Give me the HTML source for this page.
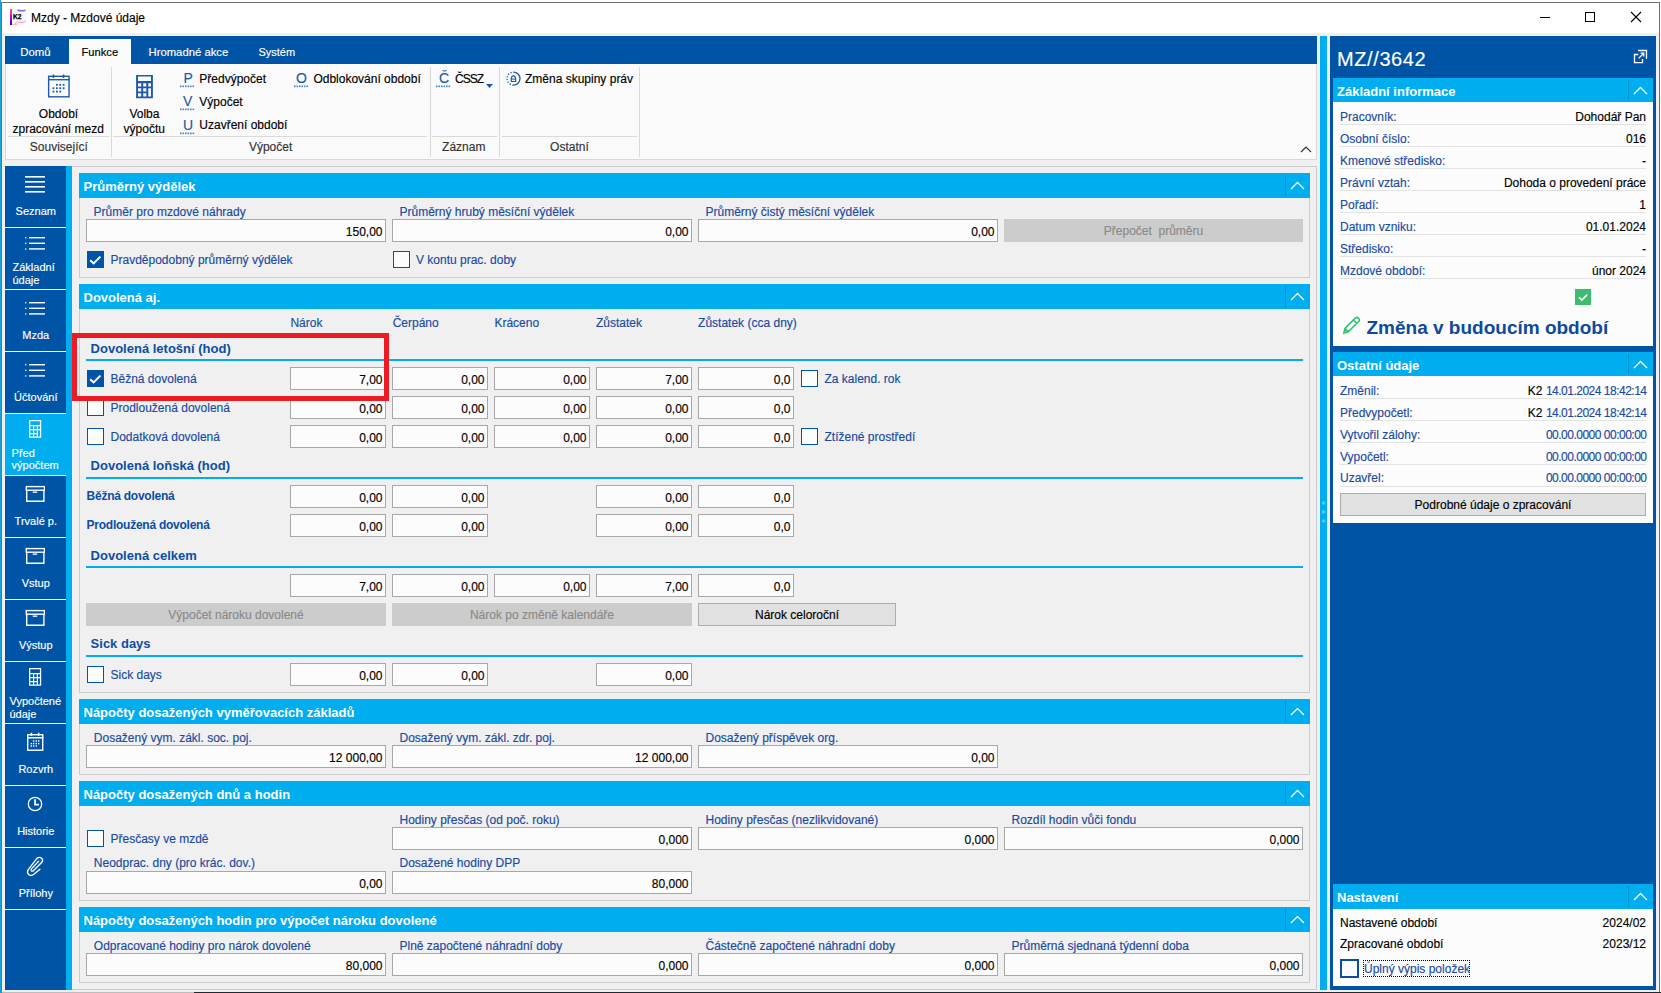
<!DOCTYPE html><html><head><meta charset="utf-8"><style>
html,body{margin:0;padding:0;width:1661px;height:993px;overflow:hidden;}
body{position:relative;font-family:"Liberation Sans",sans-serif;}
body>div,body>svg{position:absolute;}
.t{white-space:pre;-webkit-text-stroke:0.15px currentColor;}
.b{-webkit-text-stroke:0;}
</style></head><body>
<div style="left:0px;top:0px;width:1661px;height:993px;background:#ffffff;"></div>
<div style="left:0px;top:0px;width:1px;height:993px;background:#1aa3d8;"></div>
<div style="left:1px;top:2px;width:1659px;height:991px;box-sizing:border-box;border:1px solid #707070;"></div>
<div style="left:2px;top:33px;width:1657px;height:959px;background:#f0f0f0;"></div>
<svg style="left:9px;top:8px" width="18" height="18" viewBox="0 0 18 18"><defs><linearGradient id="kg" x1="0" y1="0" x2="0" y2="1"><stop offset="0" stop-color="#ff5a5a"/><stop offset="0.5" stop-color="#d400d4"/><stop offset="1" stop-color="#1a00e6"/></linearGradient></defs><rect x="3" y="1" width="14" height="16" fill="#f7f7fa"/><rect x="1" y="1" width="2" height="16" fill="url(#kg)"/><path d="M8.5 2 Q12 3.6 16.5 2.2" stroke="#7050f0" stroke-width="1.5" fill="none" opacity="0.85"/><path d="M6 15.5 Q9 13 12 14.5 Q14 15.2 16.3 12.8" stroke="#f090c0" stroke-width="1.1" fill="none" opacity="0.8"/><path d="M3.5 16.6 L8 16.6" stroke="#ffa080" stroke-width="1" opacity="0.8"/><text x="3.9" y="11.4" font-family="Liberation Sans" font-weight="bold" font-size="6.6" fill="#000" stroke="#000" stroke-width="0.25">K2</text></svg>
<div class="t" style="left:31px;top:11.84px;font-size:12px;line-height:12px;color:#000;">Mzdy - Mzdové údaje</div>
<div style="left:1540px;top:17px;width:10px;height:1px;background:#000;"></div>
<div style="left:1585px;top:12px;width:10px;height:10px;box-sizing:border-box;border:1px solid #000;"></div>
<svg style="left:1630px;top:11px" width="12" height="12" viewBox="0 0 12 12"><path d="M1 1 L11 11 M11 1 L1 11" stroke="#000" stroke-width="1.1"/></svg>
<div style="left:5px;top:36px;width:1312px;height:28px;background:#0054a5;"></div>
<div style="left:69px;top:39px;width:62px;height:25px;background:#fafafa;"></div>
<div class="t" style="left:20.2px;top:47.05px;font-size:11.4px;line-height:11.4px;color:#fff;">Domů</div>
<div class="t" style="left:81.5px;top:47.22px;font-size:11.2px;line-height:11.2px;color:#000;">Funkce</div>
<div class="t" style="left:148.5px;top:47.13px;font-size:11.3px;line-height:11.3px;color:#fff;">Hromadné akce</div>
<div class="t" style="left:258.4px;top:47.39px;font-size:11px;line-height:11px;color:#fff;">Systém</div>
<div style="left:5px;top:64px;width:1312px;height:96px;background:#fafafa;box-sizing:border-box;border:1px solid #d9d9d9;border-top:none;"></div>
<div style="left:111px;top:67px;width:1px;height:90px;background:#d9d9d9;"></div>
<div style="left:430px;top:67px;width:1px;height:90px;background:#d9d9d9;"></div>
<div style="left:499px;top:67px;width:1px;height:90px;background:#d9d9d9;"></div>
<div style="left:639px;top:67px;width:1px;height:90px;background:#d9d9d9;"></div>
<div style="left:8px;top:136px;width:101px;height:1px;background:#dadada;"></div>
<div style="left:113px;top:136px;width:314px;height:1px;background:#dadada;"></div>
<div style="left:432px;top:136px;width:65px;height:1px;background:#dadada;"></div>
<div style="left:502px;top:136px;width:135px;height:1px;background:#dadada;"></div>
<div class="t" style="left:-1.2000000000000028px;width:120px;text-align:center;top:141.04px;font-size:12px;line-height:12px;color:#333333;">Související</div>
<div class="t" style="left:210.60000000000002px;width:120px;text-align:center;top:141.04px;font-size:12px;line-height:12px;color:#333333;">Výpočet</div>
<div class="t" style="left:423.8px;width:80px;text-align:center;top:141.04px;font-size:12px;line-height:12px;color:#333333;">Záznam</div>
<div class="t" style="left:529.4px;width:80px;text-align:center;top:141.04px;font-size:12px;line-height:12px;color:#333333;">Ostatní</div>
<svg style="left:47px;top:74px" width="24" height="25" viewBox="0 0 24 25"><rect x="1.65" y="2.3" width="20.4" height="20.5" fill="none" stroke="#1e5aa8" stroke-width="1.4"/><rect x="1" y="5" width="21.7" height="1.4" fill="#1e5aa8"/><rect x="5.6" y="0.6" width="1.7" height="3.4" rx="0.6" fill="#1e5aa8"/><rect x="15.7" y="0.6" width="1.7" height="3.4" rx="0.6" fill="#1e5aa8"/>
<g fill="#1e5aa8"><rect x="9.0" y="9.9" width="1.8" height="1.8"/><rect x="12.3" y="9.9" width="1.8" height="1.8"/><rect x="15.7" y="9.9" width="1.8" height="1.8"/><rect x="5.5" y="13.3" width="1.8" height="1.8"/><rect x="9.0" y="13.3" width="1.8" height="1.8"/><rect x="12.3" y="13.3" width="1.8" height="1.8"/><rect x="15.7" y="13.3" width="1.8" height="1.8"/><rect x="5.5" y="16.7" width="1.8" height="1.8"/><rect x="9.0" y="16.7" width="1.8" height="1.8"/><rect x="12.3" y="16.7" width="1.8" height="1.8"/></g></svg>
<div class="t" style="left:3.5px;width:110px;text-align:center;top:107.84px;font-size:12px;line-height:12px;color:#000;">Období</div>
<div class="t" style="left:3.200000000000003px;width:110px;text-align:center;top:123.44px;font-size:12px;line-height:12px;color:#000;">zpracování mezd</div>
<svg style="left:136px;top:74px" width="18" height="25" viewBox="0 0 18 25"><path fill="#1e5aa8" fill-rule="evenodd" d="M0.1 0.9 H16.9 V24.3 H0.1 Z M2 2.5 V7 H15 V2.5 Z M2 9.2 V12.4 H5.2 V9.2 Z M7.2 9.2 V12.4 H10.3 V9.2 Z M12.3 9.2 V12.4 H15 V9.2 Z M2 14.3 V17.4 H5.2 V14.3 Z M7.2 14.3 V17.4 H10.3 V14.3 Z M12.3 14.3 V22.6 H15 V14.3 Z M2 19.3 V22.6 H5.2 V19.3 Z M7.2 19.3 V22.6 H10.3 V19.3 Z"/></svg>
<div class="t" style="left:104.4px;width:80px;text-align:center;top:107.84px;font-size:12px;line-height:12px;color:#000;">Volba</div>
<div class="t" style="left:104.30000000000001px;width:80px;text-align:center;top:123.44px;font-size:12px;line-height:12px;color:#000;">výpočtu</div>
<div class="t" style="left:183.5px;top:71.15px;font-size:14px;line-height:14px;color:#1e5aa8;">P</div>
<svg style="left:180px;top:85px" width="15" height="3" viewBox="0 0 15 3"><rect x="0.00" y="0.5" width="1.6" height="1.7" fill="#4f86c6"/><rect x="2.50" y="0.5" width="1.6" height="1.7" fill="#4f86c6"/><rect x="5.00" y="0.5" width="1.6" height="1.7" fill="#4f86c6"/><rect x="7.50" y="0.5" width="1.6" height="1.7" fill="#4f86c6"/><rect x="10.00" y="0.5" width="1.6" height="1.7" fill="#4f86c6"/><rect x="12.50" y="0.5" width="1.6" height="1.7" fill="#4f86c6"/><rect x="15.00" y="0.5" width="1.6" height="1.7" fill="#4f86c6"/></svg>
<div class="t" style="left:199.3px;top:72.84px;font-size:12px;line-height:12px;color:#000;">Předvýpočet</div>
<div class="t" style="left:183px;top:94.15px;font-size:14px;line-height:14px;color:#1e5aa8;">V</div>
<svg style="left:180px;top:108px" width="15" height="3" viewBox="0 0 15 3"><rect x="0.00" y="0.5" width="1.6" height="1.7" fill="#4f86c6"/><rect x="2.50" y="0.5" width="1.6" height="1.7" fill="#4f86c6"/><rect x="5.00" y="0.5" width="1.6" height="1.7" fill="#4f86c6"/><rect x="7.50" y="0.5" width="1.6" height="1.7" fill="#4f86c6"/><rect x="10.00" y="0.5" width="1.6" height="1.7" fill="#4f86c6"/><rect x="12.50" y="0.5" width="1.6" height="1.7" fill="#4f86c6"/><rect x="15.00" y="0.5" width="1.6" height="1.7" fill="#4f86c6"/></svg>
<div class="t" style="left:199.3px;top:95.84px;font-size:12px;line-height:12px;color:#000;">Výpočet</div>
<div class="t" style="left:183px;top:117.65px;font-size:14px;line-height:14px;color:#1e5aa8;">U</div>
<svg style="left:180px;top:131.5px" width="15" height="3" viewBox="0 0 15 3"><rect x="0.00" y="0.5" width="1.6" height="1.7" fill="#4f86c6"/><rect x="2.50" y="0.5" width="1.6" height="1.7" fill="#4f86c6"/><rect x="5.00" y="0.5" width="1.6" height="1.7" fill="#4f86c6"/><rect x="7.50" y="0.5" width="1.6" height="1.7" fill="#4f86c6"/><rect x="10.00" y="0.5" width="1.6" height="1.7" fill="#4f86c6"/><rect x="12.50" y="0.5" width="1.6" height="1.7" fill="#4f86c6"/><rect x="15.00" y="0.5" width="1.6" height="1.7" fill="#4f86c6"/></svg>
<div class="t" style="left:199.3px;top:119.34px;font-size:12px;line-height:12px;color:#000;">Uzavření období</div>
<div class="t" style="left:296px;top:71.15px;font-size:14px;line-height:14px;color:#1e5aa8;">O</div>
<svg style="left:294px;top:85px" width="15" height="3" viewBox="0 0 15 3"><rect x="0.00" y="0.5" width="1.6" height="1.7" fill="#4f86c6"/><rect x="2.50" y="0.5" width="1.6" height="1.7" fill="#4f86c6"/><rect x="5.00" y="0.5" width="1.6" height="1.7" fill="#4f86c6"/><rect x="7.50" y="0.5" width="1.6" height="1.7" fill="#4f86c6"/><rect x="10.00" y="0.5" width="1.6" height="1.7" fill="#4f86c6"/><rect x="12.50" y="0.5" width="1.6" height="1.7" fill="#4f86c6"/><rect x="15.00" y="0.5" width="1.6" height="1.7" fill="#4f86c6"/></svg>
<div class="t" style="left:313.4px;top:72.84px;font-size:12px;line-height:12px;color:#000;">Odblokování období</div>
<div class="t" style="left:439px;top:71.15px;font-size:14px;line-height:14px;color:#1e5aa8;">Č</div>
<svg style="left:436px;top:85px" width="15" height="3" viewBox="0 0 15 3"><rect x="0.00" y="0.5" width="1.6" height="1.7" fill="#4f86c6"/><rect x="2.50" y="0.5" width="1.6" height="1.7" fill="#4f86c6"/><rect x="5.00" y="0.5" width="1.6" height="1.7" fill="#4f86c6"/><rect x="7.50" y="0.5" width="1.6" height="1.7" fill="#4f86c6"/><rect x="10.00" y="0.5" width="1.6" height="1.7" fill="#4f86c6"/><rect x="12.50" y="0.5" width="1.6" height="1.7" fill="#4f86c6"/><rect x="15.00" y="0.5" width="1.6" height="1.7" fill="#4f86c6"/></svg>
<div class="t" style="left:455px;top:72.84px;font-size:12px;line-height:12px;color:#000;letter-spacing:-1px;">ČSSZ</div>
<svg style="left:486px;top:84px" width="7" height="4" viewBox="0 0 7 4"><path d="M0 0 L7 0 L3.5 4 Z" fill="#1e5aa8"/></svg>
<svg style="left:500px;top:66px" width="30" height="26" viewBox="0 0 30 26"><path d="M13.5 6.1 A6.5 6.5 0 0 1 13.5 19.1" fill="none" stroke="#1e5aa8" stroke-width="1.3"/><path d="M13.5 19.1 A6.5 6.5 0 0 1 13.5 6.1" fill="none" stroke="#1e5aa8" stroke-width="1.3" stroke-dasharray="1.2 1.6"/><path d="M11.3 15.5 V12.2 Q11.3 10.2 13.4 9.6 Q15.6 10.2 15.6 12.2 V15.5 Z" fill="none" stroke="#1e5aa8" stroke-width="1.2"/><rect x="11.3" y="12.6" width="4.3" height="1" fill="#1e5aa8"/></svg>
<div class="t" style="left:525px;top:72.84px;font-size:12px;line-height:12px;color:#000;">Změna skupiny práv</div>
<svg style="left:1300px;top:146px" width="12" height="7" viewBox="0 0 12 7"><path d="M1 6 L6 1 L11 6" fill="none" stroke="#333" stroke-width="1.1"/></svg>
<div style="left:5px;top:166px;width:61px;height:824px;background:#0054a5;"></div>
<div style="left:66px;top:166px;width:6px;height:824px;background:#00adef;"></div>
<div style="left:5px;top:414px;width:61px;height:61px;background:#00adef;"></div>
<div style="left:5px;top:227px;width:61px;height:1px;background:#ffffff;"></div>
<div style="left:5px;top:289px;width:61px;height:1px;background:#ffffff;"></div>
<div style="left:5px;top:351px;width:61px;height:1px;background:#ffffff;"></div>
<div style="left:5px;top:413px;width:61px;height:1px;background:#ffffff;"></div>
<div style="left:5px;top:475px;width:61px;height:1px;background:#ffffff;"></div>
<div style="left:5px;top:537px;width:61px;height:1px;background:#ffffff;"></div>
<div style="left:5px;top:599px;width:61px;height:1px;background:#ffffff;"></div>
<div style="left:5px;top:661px;width:61px;height:1px;background:#ffffff;"></div>
<div style="left:5px;top:723px;width:61px;height:1px;background:#ffffff;"></div>
<div style="left:5px;top:785px;width:61px;height:1px;background:#ffffff;"></div>
<div style="left:5px;top:847px;width:61px;height:1px;background:#ffffff;"></div>
<div style="left:5px;top:909px;width:61px;height:1px;background:#ffffff;"></div>
<svg style="left:25px;top:176px" width="21" height="17" viewBox="0 0 21 17"><rect x="0" y="0" width="20" height="1.6" fill="#fff"/><rect x="0" y="5" width="20" height="1.6" fill="#fff"/><rect x="0" y="10" width="20" height="1.6" fill="#fff"/><rect x="0" y="15" width="20" height="1.6" fill="#fff"/></svg>
<div class="t" style="left:5.799999999999997px;width:60px;text-align:center;top:205.69px;font-size:11px;line-height:11px;color:#ffffff;">Seznam</div>
<svg style="left:25px;top:236.7px" width="21" height="14" viewBox="0 0 21 14"><rect x="0.1" y="0.10" width="1.3" height="1.3" fill="#fff"/><rect x="4" y="0.00" width="16" height="1.4" fill="#fff"/><rect x="0.1" y="5.70" width="1.3" height="1.3" fill="#fff"/><rect x="4" y="5.60" width="16" height="1.4" fill="#fff"/><rect x="0.1" y="11.30" width="1.3" height="1.3" fill="#fff"/><rect x="4" y="11.20" width="16" height="1.4" fill="#fff"/></svg>
<div class="t" style="left:12.5px;top:261.69px;font-size:11px;line-height:11px;color:#ffffff;">Základní</div>
<div class="t" style="left:12.5px;top:274.69px;font-size:11px;line-height:11px;color:#ffffff;">údaje</div>
<svg style="left:25px;top:301.7px" width="21" height="14" viewBox="0 0 21 14"><rect x="0.1" y="0.10" width="1.3" height="1.3" fill="#fff"/><rect x="4" y="0.00" width="16" height="1.4" fill="#fff"/><rect x="0.1" y="5.70" width="1.3" height="1.3" fill="#fff"/><rect x="4" y="5.60" width="16" height="1.4" fill="#fff"/><rect x="0.1" y="11.30" width="1.3" height="1.3" fill="#fff"/><rect x="4" y="11.20" width="16" height="1.4" fill="#fff"/></svg>
<div class="t" style="left:5.799999999999997px;width:60px;text-align:center;top:329.69px;font-size:11px;line-height:11px;color:#ffffff;">Mzda</div>
<svg style="left:25px;top:363.9px" width="21" height="14" viewBox="0 0 21 14"><rect x="0.1" y="0.10" width="1.3" height="1.3" fill="#fff"/><rect x="4" y="0.00" width="16" height="1.4" fill="#fff"/><rect x="0.1" y="5.70" width="1.3" height="1.3" fill="#fff"/><rect x="4" y="5.60" width="16" height="1.4" fill="#fff"/><rect x="0.1" y="11.30" width="1.3" height="1.3" fill="#fff"/><rect x="4" y="11.20" width="16" height="1.4" fill="#fff"/></svg>
<div class="t" style="left:5.799999999999997px;width:60px;text-align:center;top:391.69px;font-size:11px;line-height:11px;color:#ffffff;">Účtování</div>
<svg style="left:29px;top:420px" width="13" height="19" viewBox="0 0 13 19"><path fill="#fff" fill-rule="evenodd" d="M0 0 H12.2 V17.8 H0 Z M1.3 1.3 V5 H10.9 V1.3 Z M1.3 6.3 V9 H4 V6.3 Z M5.2 6.3 V9 H7.8 V6.3 Z M9 6.3 V9 H10.9 V6.3 Z M1.3 10.2 V13.1 H4 V10.2 Z M5.2 10.2 V13.1 H7.8 V10.2 Z M9 10.2 V16.5 H10.9 V10.2 Z M1.3 14.3 V16.5 H4 V14.3 Z M5.2 14.3 V16.5 H7.8 V14.3 Z"/></svg>
<div class="t" style="left:11.6px;top:447.69px;font-size:11px;line-height:11px;color:#ffffff;">Před</div>
<div class="t" style="left:11.6px;top:460.19px;font-size:11px;line-height:11px;color:#ffffff;">výpočtem</div>
<svg style="left:25px;top:485px" width="20" height="18" viewBox="0 0 20 18"><rect x="1.3" y="1.6" width="18.2" height="3.6" fill="none" stroke="#fff" stroke-width="1.4"/><path d="M1.7 5 V16.3 H18.9 V5" fill="none" stroke="#fff" stroke-width="1.4"/><rect x="7.7" y="6.5" width="4.5" height="1.3" fill="#fff"/></svg>
<div class="t" style="left:5.799999999999997px;width:60px;text-align:center;top:515.69px;font-size:11px;line-height:11px;color:#ffffff;">Trvalé p.</div>
<svg style="left:25px;top:547px" width="20" height="18" viewBox="0 0 20 18"><rect x="1.3" y="1.6" width="18.2" height="3.6" fill="none" stroke="#fff" stroke-width="1.4"/><path d="M1.7 5 V16.3 H18.9 V5" fill="none" stroke="#fff" stroke-width="1.4"/><rect x="7.7" y="6.5" width="4.5" height="1.3" fill="#fff"/></svg>
<div class="t" style="left:5.799999999999997px;width:60px;text-align:center;top:577.69px;font-size:11px;line-height:11px;color:#ffffff;">Vstup</div>
<svg style="left:25px;top:609px" width="20" height="18" viewBox="0 0 20 18"><rect x="1.3" y="1.6" width="18.2" height="3.6" fill="none" stroke="#fff" stroke-width="1.4"/><path d="M1.7 5 V16.3 H18.9 V5" fill="none" stroke="#fff" stroke-width="1.4"/><rect x="7.7" y="6.5" width="4.5" height="1.3" fill="#fff"/></svg>
<div class="t" style="left:5.799999999999997px;width:60px;text-align:center;top:639.69px;font-size:11px;line-height:11px;color:#ffffff;">Výstup</div>
<svg style="left:29px;top:668px" width="13" height="19" viewBox="0 0 13 19"><path fill="#fff" fill-rule="evenodd" d="M0 0 H12.2 V17.8 H0 Z M1.3 1.3 V5 H10.9 V1.3 Z M1.3 6.3 V9 H4 V6.3 Z M5.2 6.3 V9 H7.8 V6.3 Z M9 6.3 V9 H10.9 V6.3 Z M1.3 10.2 V13.1 H4 V10.2 Z M5.2 10.2 V13.1 H7.8 V10.2 Z M9 10.2 V16.5 H10.9 V10.2 Z M1.3 14.3 V16.5 H4 V14.3 Z M5.2 14.3 V16.5 H7.8 V14.3 Z"/></svg>
<div class="t" style="left:9.5px;top:695.69px;font-size:11px;line-height:11px;color:#ffffff;">Vypočtené</div>
<div class="t" style="left:9.5px;top:708.69px;font-size:11px;line-height:11px;color:#ffffff;">údaje</div>
<svg style="left:26px;top:732px" width="18" height="19" viewBox="0 0 18 19"><rect x="1.7" y="2.7" width="15" height="15.5" fill="none" stroke="#fff" stroke-width="1.4"/><rect x="1" y="5" width="16.4" height="1.5" fill="#fff"/><rect x="4.6" y="0.8" width="1.6" height="3" fill="#fff"/><rect x="11.8" y="0.8" width="1.6" height="3" fill="#fff"/><g fill="#fff"><rect x="6.9" y="8.3" width="1.4" height="1.4"/><rect x="9.6" y="8.3" width="1.4" height="1.4"/><rect x="12.0" y="8.3" width="1.4" height="1.4"/><rect x="4.6" y="10.9" width="1.4" height="1.4"/><rect x="6.9" y="10.9" width="1.4" height="1.4"/><rect x="9.6" y="10.9" width="1.4" height="1.4"/><rect x="12.0" y="10.9" width="1.4" height="1.4"/><rect x="4.6" y="13.3" width="1.4" height="1.4"/><rect x="6.9" y="13.3" width="1.4" height="1.4"/><rect x="9.6" y="13.3" width="1.4" height="1.4"/></g></svg>
<div class="t" style="left:5.799999999999997px;width:60px;text-align:center;top:763.69px;font-size:11px;line-height:11px;color:#ffffff;">Rozvrh</div>
<svg style="left:26px;top:795px" width="18" height="18" viewBox="0 0 18 18"><circle cx="9" cy="9" r="6.7" fill="none" stroke="#fff" stroke-width="1.3"/><path d="M9 4.3 V9.6 H12.9" fill="none" stroke="#fff" stroke-width="1.7"/></svg>
<div class="t" style="left:5.799999999999997px;width:60px;text-align:center;top:825.69px;font-size:11px;line-height:11px;color:#ffffff;">Historie</div>
<svg style="left:20px;top:852px" width="30" height="30" viewBox="0 0 30 30"><path d="M19.9 17.2 L13.9 22.3 Q10.6 24.6 8.4 22.3 Q6.4 19.9 8.6 17.2 L16.9 6.4 Q19.6 4.4 21.8 6.4 Q23.5 8.7 21.6 10.6 L13.6 18.6 Q12.3 19.6 11.4 18.7 Q10.6 17.7 11.6 16.6 L18.6 9.2" fill="none" stroke="#fff" stroke-width="1.35" stroke-linecap="round"/></svg>
<div class="t" style="left:5.799999999999997px;width:60px;text-align:center;top:887.69px;font-size:11px;line-height:11px;color:#ffffff;">Přílohy</div>
<div style="left:72px;top:166px;width:1245px;height:824px;background:#f0f0f0;box-sizing:border-box;border:1px solid #cbcbcb;border-left:none;"></div>
<div style="left:79px;top:198px;width:1231px;height:80px;box-sizing:border-box;border:1px solid #cdcdcd;border-top:none;"></div>
<div style="left:79px;top:173px;width:1231px;height:25px;background:#00adef;"></div>
<div class="t b" style="left:83.5px;top:180.00px;font-size:13px;line-height:13px;color:#fff;font-weight:bold;">Průměrný výdělek</div>
<div style="left:1285px;top:175px;width:1px;height:21px;background:#0092cf;"></div>
<svg style="left:1290px;top:181px" width="15" height="9" viewBox="0 0 15 9"><path d="M1 8 L7.5 1.5 L14 8" fill="none" stroke="#fff" stroke-width="1.3"/></svg>
<div class="t" style="left:93.6px;top:205.84px;font-size:12px;line-height:12px;color:#1a4aa2;">Průměr pro mzdové náhrady</div>
<div class="t" style="left:399.5px;top:205.84px;font-size:12px;line-height:12px;color:#1a4aa2;">Průměrný hrubý měsíční výdělek</div>
<div class="t" style="left:705.5px;top:205.84px;font-size:12px;line-height:12px;color:#1a4aa2;">Průměrný čistý měsíční výdělek</div>
<div style="left:86px;top:219px;width:300px;height:23px;background:#fcfcfc;box-sizing:border-box;border:1px solid #a8a8a8;"></div>
<div class="t" style="left:82.5px;width:300px;text-align:right;top:225.84px;font-size:12px;line-height:12px;color:#000;">150,00</div>
<div style="left:392px;top:219px;width:300px;height:23px;background:#fcfcfc;box-sizing:border-box;border:1px solid #a8a8a8;"></div>
<div class="t" style="left:388.5px;width:300px;text-align:right;top:225.84px;font-size:12px;line-height:12px;color:#000;">0,00</div>
<div style="left:698px;top:219px;width:300px;height:23px;background:#fcfcfc;box-sizing:border-box;border:1px solid #a8a8a8;"></div>
<div class="t" style="left:694.5px;width:300px;text-align:right;top:225.84px;font-size:12px;line-height:12px;color:#000;">0,00</div>
<div style="left:1004px;top:219px;width:299px;height:23px;background:#cccccc;"></div>
<div class="t" style="left:1004.0px;width:299px;text-align:center;top:225.34px;font-size:12px;line-height:12px;color:#8a8a8a;">Přepočet  průměru</div>
<svg style="left:87px;top:251px" width="17" height="17" viewBox="0 0 17 17"><rect width="17" height="17" fill="#0054a5"/><path d="M3.2 9.2 L6.6 12.4 L13.4 5.6" fill="none" stroke="#fff" stroke-width="2"/></svg>
<div class="t" style="left:110.5px;top:253.84px;font-size:12px;line-height:12px;color:#1a4aa2;">Pravděpodobný průměrný výdělek</div>
<div style="left:393px;top:251px;width:17px;height:17px;background:#fcfcfc;box-sizing:border-box;border:1px solid #0054a5;"></div>
<div class="t" style="left:416px;top:253.84px;font-size:12px;line-height:12px;color:#1a4aa2;">V kontu prac. doby</div>
<div style="left:79px;top:309px;width:1231px;height:384px;box-sizing:border-box;border:1px solid #cdcdcd;border-top:none;"></div>
<div style="left:79px;top:284px;width:1231px;height:25px;background:#00adef;"></div>
<div class="t b" style="left:83.5px;top:291.00px;font-size:13px;line-height:13px;color:#fff;font-weight:bold;">Dovolená aj.</div>
<div style="left:1285px;top:286px;width:1px;height:21px;background:#0092cf;"></div>
<svg style="left:1290px;top:292px" width="15" height="9" viewBox="0 0 15 9"><path d="M1 8 L7.5 1.5 L14 8" fill="none" stroke="#fff" stroke-width="1.3"/></svg>
<div class="t" style="left:290.4px;top:316.84px;font-size:12px;line-height:12px;color:#1a4aa2;">Nárok</div>
<div class="t" style="left:392.7px;top:316.84px;font-size:12px;line-height:12px;color:#1a4aa2;">Čerpáno</div>
<div class="t" style="left:494.4px;top:316.84px;font-size:12px;line-height:12px;color:#1a4aa2;">Kráceno</div>
<div class="t" style="left:596px;top:316.84px;font-size:12px;line-height:12px;color:#1a4aa2;">Zůstatek</div>
<div class="t" style="left:698.1px;top:316.84px;font-size:12px;line-height:12px;color:#1a4aa2;">Zůstatek (cca dny)</div>
<div class="t b" style="left:90.6px;top:341.60px;font-size:13px;line-height:13px;color:#0b4ea6;font-weight:bold;">Dovolená letošní (hod)</div>
<div style="left:86px;top:359px;width:1217px;height:2px;background:#00adef;"></div>
<div style="left:290px;top:367px;width:96px;height:23px;background:#fcfcfc;box-sizing:border-box;border:1px solid #a8a8a8;"></div>
<div class="t" style="left:286.5px;width:96px;text-align:right;top:373.84px;font-size:12px;line-height:12px;color:#000;">7,00</div>
<div style="left:392px;top:367px;width:96px;height:23px;background:#fcfcfc;box-sizing:border-box;border:1px solid #a8a8a8;"></div>
<div class="t" style="left:388.5px;width:96px;text-align:right;top:373.84px;font-size:12px;line-height:12px;color:#000;">0,00</div>
<div style="left:494px;top:367px;width:96px;height:23px;background:#fcfcfc;box-sizing:border-box;border:1px solid #a8a8a8;"></div>
<div class="t" style="left:490.5px;width:96px;text-align:right;top:373.84px;font-size:12px;line-height:12px;color:#000;">0,00</div>
<div style="left:596px;top:367px;width:96px;height:23px;background:#fcfcfc;box-sizing:border-box;border:1px solid #a8a8a8;"></div>
<div class="t" style="left:592.5px;width:96px;text-align:right;top:373.84px;font-size:12px;line-height:12px;color:#000;">7,00</div>
<div style="left:698px;top:367px;width:96px;height:23px;background:#fcfcfc;box-sizing:border-box;border:1px solid #a8a8a8;"></div>
<div class="t" style="left:694.5px;width:96px;text-align:right;top:373.84px;font-size:12px;line-height:12px;color:#000;">0,0</div>
<svg style="left:87px;top:370px" width="17" height="17" viewBox="0 0 17 17"><rect width="17" height="17" fill="#0054a5"/><path d="M3.2 9.2 L6.6 12.4 L13.4 5.6" fill="none" stroke="#fff" stroke-width="2"/></svg>
<div class="t" style="left:110.5px;top:372.84px;font-size:12px;line-height:12px;color:#1a4aa2;">Běžná dovolená</div>
<div style="left:801px;top:370px;width:17px;height:17px;background:#fcfcfc;box-sizing:border-box;border:1px solid #0054a5;"></div>
<div class="t" style="left:824.5px;top:372.84px;font-size:12px;line-height:12px;color:#1a4aa2;">Za kalend. rok</div>
<div style="left:290px;top:396px;width:96px;height:23px;background:#fcfcfc;box-sizing:border-box;border:1px solid #a8a8a8;"></div>
<div class="t" style="left:286.5px;width:96px;text-align:right;top:402.84px;font-size:12px;line-height:12px;color:#000;">0,00</div>
<div style="left:392px;top:396px;width:96px;height:23px;background:#fcfcfc;box-sizing:border-box;border:1px solid #a8a8a8;"></div>
<div class="t" style="left:388.5px;width:96px;text-align:right;top:402.84px;font-size:12px;line-height:12px;color:#000;">0,00</div>
<div style="left:494px;top:396px;width:96px;height:23px;background:#fcfcfc;box-sizing:border-box;border:1px solid #a8a8a8;"></div>
<div class="t" style="left:490.5px;width:96px;text-align:right;top:402.84px;font-size:12px;line-height:12px;color:#000;">0,00</div>
<div style="left:596px;top:396px;width:96px;height:23px;background:#fcfcfc;box-sizing:border-box;border:1px solid #a8a8a8;"></div>
<div class="t" style="left:592.5px;width:96px;text-align:right;top:402.84px;font-size:12px;line-height:12px;color:#000;">0,00</div>
<div style="left:698px;top:396px;width:96px;height:23px;background:#fcfcfc;box-sizing:border-box;border:1px solid #a8a8a8;"></div>
<div class="t" style="left:694.5px;width:96px;text-align:right;top:402.84px;font-size:12px;line-height:12px;color:#000;">0,0</div>
<div style="left:87px;top:399px;width:17px;height:17px;background:#fcfcfc;box-sizing:border-box;border:1px solid #0054a5;"></div>
<div class="t" style="left:110.5px;top:401.84px;font-size:12px;line-height:12px;color:#1a4aa2;">Prodloužená dovolená</div>
<div style="left:290px;top:425px;width:96px;height:23px;background:#fcfcfc;box-sizing:border-box;border:1px solid #a8a8a8;"></div>
<div class="t" style="left:286.5px;width:96px;text-align:right;top:431.84px;font-size:12px;line-height:12px;color:#000;">0,00</div>
<div style="left:392px;top:425px;width:96px;height:23px;background:#fcfcfc;box-sizing:border-box;border:1px solid #a8a8a8;"></div>
<div class="t" style="left:388.5px;width:96px;text-align:right;top:431.84px;font-size:12px;line-height:12px;color:#000;">0,00</div>
<div style="left:494px;top:425px;width:96px;height:23px;background:#fcfcfc;box-sizing:border-box;border:1px solid #a8a8a8;"></div>
<div class="t" style="left:490.5px;width:96px;text-align:right;top:431.84px;font-size:12px;line-height:12px;color:#000;">0,00</div>
<div style="left:596px;top:425px;width:96px;height:23px;background:#fcfcfc;box-sizing:border-box;border:1px solid #a8a8a8;"></div>
<div class="t" style="left:592.5px;width:96px;text-align:right;top:431.84px;font-size:12px;line-height:12px;color:#000;">0,00</div>
<div style="left:698px;top:425px;width:96px;height:23px;background:#fcfcfc;box-sizing:border-box;border:1px solid #a8a8a8;"></div>
<div class="t" style="left:694.5px;width:96px;text-align:right;top:431.84px;font-size:12px;line-height:12px;color:#000;">0,0</div>
<div style="left:87px;top:428px;width:17px;height:17px;background:#fcfcfc;box-sizing:border-box;border:1px solid #0054a5;"></div>
<div class="t" style="left:110.5px;top:430.84px;font-size:12px;line-height:12px;color:#1a4aa2;">Dodatková dovolená</div>
<div style="left:801px;top:428px;width:17px;height:17px;background:#fcfcfc;box-sizing:border-box;border:1px solid #0054a5;"></div>
<div class="t" style="left:824.5px;top:430.84px;font-size:12px;line-height:12px;color:#1a4aa2;">Ztížené prostředí</div>
<div class="t b" style="left:90.6px;top:459.40px;font-size:13px;line-height:13px;color:#0b4ea6;font-weight:bold;">Dovolená loňská (hod)</div>
<div style="left:86px;top:477px;width:1217px;height:2px;background:#00adef;"></div>
<div style="left:290px;top:485px;width:96px;height:23px;background:#fcfcfc;box-sizing:border-box;border:1px solid #a8a8a8;"></div>
<div class="t" style="left:286.5px;width:96px;text-align:right;top:491.84px;font-size:12px;line-height:12px;color:#000;">0,00</div>
<div style="left:392px;top:485px;width:96px;height:23px;background:#fcfcfc;box-sizing:border-box;border:1px solid #a8a8a8;"></div>
<div class="t" style="left:388.5px;width:96px;text-align:right;top:491.84px;font-size:12px;line-height:12px;color:#000;">0,00</div>
<div style="left:596px;top:485px;width:96px;height:23px;background:#fcfcfc;box-sizing:border-box;border:1px solid #a8a8a8;"></div>
<div class="t" style="left:592.5px;width:96px;text-align:right;top:491.84px;font-size:12px;line-height:12px;color:#000;">0,00</div>
<div style="left:698px;top:485px;width:96px;height:23px;background:#fcfcfc;box-sizing:border-box;border:1px solid #a8a8a8;"></div>
<div class="t" style="left:694.5px;width:96px;text-align:right;top:491.84px;font-size:12px;line-height:12px;color:#000;">0,0</div>
<div class="t b" style="left:86.6px;top:490.14px;font-size:12px;line-height:12px;color:#0b4ea6;font-weight:bold;letter-spacing:-0.25px;">Běžná dovolená</div>
<div style="left:290px;top:514px;width:96px;height:23px;background:#fcfcfc;box-sizing:border-box;border:1px solid #a8a8a8;"></div>
<div class="t" style="left:286.5px;width:96px;text-align:right;top:520.84px;font-size:12px;line-height:12px;color:#000;">0,00</div>
<div style="left:392px;top:514px;width:96px;height:23px;background:#fcfcfc;box-sizing:border-box;border:1px solid #a8a8a8;"></div>
<div class="t" style="left:388.5px;width:96px;text-align:right;top:520.84px;font-size:12px;line-height:12px;color:#000;">0,00</div>
<div style="left:596px;top:514px;width:96px;height:23px;background:#fcfcfc;box-sizing:border-box;border:1px solid #a8a8a8;"></div>
<div class="t" style="left:592.5px;width:96px;text-align:right;top:520.84px;font-size:12px;line-height:12px;color:#000;">0,00</div>
<div style="left:698px;top:514px;width:96px;height:23px;background:#fcfcfc;box-sizing:border-box;border:1px solid #a8a8a8;"></div>
<div class="t" style="left:694.5px;width:96px;text-align:right;top:520.84px;font-size:12px;line-height:12px;color:#000;">0,0</div>
<div class="t b" style="left:86.6px;top:519.14px;font-size:12px;line-height:12px;color:#0b4ea6;font-weight:bold;letter-spacing:-0.25px;">Prodloužená dovolená</div>
<div class="t b" style="left:90.6px;top:548.50px;font-size:13px;line-height:13px;color:#0b4ea6;font-weight:bold;">Dovolená celkem</div>
<div style="left:86px;top:566px;width:1217px;height:2px;background:#00adef;"></div>
<div style="left:290px;top:574px;width:96px;height:23px;background:#fcfcfc;box-sizing:border-box;border:1px solid #a8a8a8;"></div>
<div class="t" style="left:286.5px;width:96px;text-align:right;top:580.84px;font-size:12px;line-height:12px;color:#000;">7,00</div>
<div style="left:392px;top:574px;width:96px;height:23px;background:#fcfcfc;box-sizing:border-box;border:1px solid #a8a8a8;"></div>
<div class="t" style="left:388.5px;width:96px;text-align:right;top:580.84px;font-size:12px;line-height:12px;color:#000;">0,00</div>
<div style="left:494px;top:574px;width:96px;height:23px;background:#fcfcfc;box-sizing:border-box;border:1px solid #a8a8a8;"></div>
<div class="t" style="left:490.5px;width:96px;text-align:right;top:580.84px;font-size:12px;line-height:12px;color:#000;">0,00</div>
<div style="left:596px;top:574px;width:96px;height:23px;background:#fcfcfc;box-sizing:border-box;border:1px solid #a8a8a8;"></div>
<div class="t" style="left:592.5px;width:96px;text-align:right;top:580.84px;font-size:12px;line-height:12px;color:#000;">7,00</div>
<div style="left:698px;top:574px;width:96px;height:23px;background:#fcfcfc;box-sizing:border-box;border:1px solid #a8a8a8;"></div>
<div class="t" style="left:694.5px;width:96px;text-align:right;top:580.84px;font-size:12px;line-height:12px;color:#000;">0,0</div>
<div style="left:86px;top:603px;width:300px;height:23px;background:#cccccc;"></div>
<div class="t" style="left:86.0px;width:300px;text-align:center;top:609.34px;font-size:12px;line-height:12px;color:#8a8a8a;">Výpočet nároku dovolené</div>
<div style="left:392px;top:603px;width:300px;height:23px;background:#cccccc;"></div>
<div class="t" style="left:392.0px;width:300px;text-align:center;top:609.34px;font-size:12px;line-height:12px;color:#8a8a8a;">Nárok po změně kalendáře</div>
<div style="left:698px;top:603px;width:198px;height:23px;background:#e1e1e1;box-sizing:border-box;border:1px solid #adadad;"></div>
<div class="t" style="left:698.0px;width:198px;text-align:center;top:609.34px;font-size:12px;line-height:12px;color:#000;">Nárok celoroční</div>
<div class="t b" style="left:90.6px;top:637.20px;font-size:13px;line-height:13px;color:#0b4ea6;font-weight:bold;">Sick days</div>
<div style="left:86px;top:655px;width:1217px;height:2px;background:#00adef;"></div>
<div style="left:290px;top:663px;width:96px;height:23px;background:#fcfcfc;box-sizing:border-box;border:1px solid #a8a8a8;"></div>
<div class="t" style="left:286.5px;width:96px;text-align:right;top:669.84px;font-size:12px;line-height:12px;color:#000;">0,00</div>
<div style="left:392px;top:663px;width:96px;height:23px;background:#fcfcfc;box-sizing:border-box;border:1px solid #a8a8a8;"></div>
<div class="t" style="left:388.5px;width:96px;text-align:right;top:669.84px;font-size:12px;line-height:12px;color:#000;">0,00</div>
<div style="left:596px;top:663px;width:96px;height:23px;background:#fcfcfc;box-sizing:border-box;border:1px solid #a8a8a8;"></div>
<div class="t" style="left:592.5px;width:96px;text-align:right;top:669.84px;font-size:12px;line-height:12px;color:#000;">0,00</div>
<div style="left:87px;top:666px;width:17px;height:17px;background:#fcfcfc;box-sizing:border-box;border:1px solid #0054a5;"></div>
<div class="t" style="left:110.5px;top:668.84px;font-size:12px;line-height:12px;color:#1a4aa2;">Sick days</div>
<div style="left:72px;top:333px;width:317px;height:68px;box-sizing:border-box;border:5px solid #ec1c24;"></div>
<div style="left:79px;top:724px;width:1231px;height:51px;box-sizing:border-box;border:1px solid #cdcdcd;border-top:none;"></div>
<div style="left:79px;top:699px;width:1231px;height:25px;background:#00adef;"></div>
<div class="t b" style="left:83.5px;top:706.00px;font-size:13px;line-height:13px;color:#fff;font-weight:bold;">Nápočty dosažených vyměřovacích základů</div>
<div style="left:1285px;top:701px;width:1px;height:21px;background:#0092cf;"></div>
<svg style="left:1290px;top:707px" width="15" height="9" viewBox="0 0 15 9"><path d="M1 8 L7.5 1.5 L14 8" fill="none" stroke="#fff" stroke-width="1.3"/></svg>
<div class="t" style="left:93.8px;top:731.84px;font-size:12px;line-height:12px;color:#1a4aa2;">Dosažený vym. zákl. soc. poj.</div>
<div class="t" style="left:399.5px;top:731.84px;font-size:12px;line-height:12px;color:#1a4aa2;">Dosažený vym. zákl. zdr. poj.</div>
<div class="t" style="left:705.5px;top:731.84px;font-size:12px;line-height:12px;color:#1a4aa2;">Dosažený příspěvek org.</div>
<div style="left:86px;top:745px;width:300px;height:23px;background:#fcfcfc;box-sizing:border-box;border:1px solid #a8a8a8;"></div>
<div class="t" style="left:82.5px;width:300px;text-align:right;top:751.84px;font-size:12px;line-height:12px;color:#000;">12 000,00</div>
<div style="left:392px;top:745px;width:300px;height:23px;background:#fcfcfc;box-sizing:border-box;border:1px solid #a8a8a8;"></div>
<div class="t" style="left:388.5px;width:300px;text-align:right;top:751.84px;font-size:12px;line-height:12px;color:#000;">12 000,00</div>
<div style="left:698px;top:745px;width:300px;height:23px;background:#fcfcfc;box-sizing:border-box;border:1px solid #a8a8a8;"></div>
<div class="t" style="left:694.5px;width:300px;text-align:right;top:751.84px;font-size:12px;line-height:12px;color:#000;">0,00</div>
<div style="left:79px;top:806px;width:1231px;height:95px;box-sizing:border-box;border:1px solid #cdcdcd;border-top:none;"></div>
<div style="left:79px;top:781px;width:1231px;height:25px;background:#00adef;"></div>
<div class="t b" style="left:83.5px;top:788.00px;font-size:13px;line-height:13px;color:#fff;font-weight:bold;">Nápočty dosažených dnů a hodin</div>
<div style="left:1285px;top:783px;width:1px;height:21px;background:#0092cf;"></div>
<svg style="left:1290px;top:789px" width="15" height="9" viewBox="0 0 15 9"><path d="M1 8 L7.5 1.5 L14 8" fill="none" stroke="#fff" stroke-width="1.3"/></svg>
<div class="t" style="left:399.5px;top:813.84px;font-size:12px;line-height:12px;color:#1a4aa2;">Hodiny přesčas (od poč. roku)</div>
<div class="t" style="left:705.5px;top:813.84px;font-size:12px;line-height:12px;color:#1a4aa2;">Hodiny přesčas (nezlikvidované)</div>
<div class="t" style="left:1011.5px;top:813.84px;font-size:12px;line-height:12px;color:#1a4aa2;">Rozdíl hodin vůči fondu</div>
<div style="left:392px;top:827px;width:300px;height:23px;background:#fcfcfc;box-sizing:border-box;border:1px solid #a8a8a8;"></div>
<div class="t" style="left:388.5px;width:300px;text-align:right;top:833.84px;font-size:12px;line-height:12px;color:#000;">0,000</div>
<div style="left:698px;top:827px;width:300px;height:23px;background:#fcfcfc;box-sizing:border-box;border:1px solid #a8a8a8;"></div>
<div class="t" style="left:694.5px;width:300px;text-align:right;top:833.84px;font-size:12px;line-height:12px;color:#000;">0,000</div>
<div style="left:1004px;top:827px;width:299px;height:23px;background:#fcfcfc;box-sizing:border-box;border:1px solid #a8a8a8;"></div>
<div class="t" style="left:1000.5px;width:299px;text-align:right;top:833.84px;font-size:12px;line-height:12px;color:#000;">0,000</div>
<div style="left:87px;top:830px;width:17px;height:17px;background:#fcfcfc;box-sizing:border-box;border:1px solid #0054a5;"></div>
<div class="t" style="left:110.5px;top:832.84px;font-size:12px;line-height:12px;color:#1a4aa2;">Přesčasy ve mzdě</div>
<div class="t" style="left:93.8px;top:856.84px;font-size:12px;line-height:12px;color:#1a4aa2;">Neodprac. dny (pro krác. dov.)</div>
<div class="t" style="left:399.5px;top:856.84px;font-size:12px;line-height:12px;color:#1a4aa2;">Dosažené hodiny DPP</div>
<div style="left:86px;top:871px;width:300px;height:23px;background:#fcfcfc;box-sizing:border-box;border:1px solid #a8a8a8;"></div>
<div class="t" style="left:82.5px;width:300px;text-align:right;top:877.84px;font-size:12px;line-height:12px;color:#000;">0,00</div>
<div style="left:392px;top:871px;width:300px;height:23px;background:#fcfcfc;box-sizing:border-box;border:1px solid #a8a8a8;"></div>
<div class="t" style="left:388.5px;width:300px;text-align:right;top:877.84px;font-size:12px;line-height:12px;color:#000;">80,000</div>
<div style="left:79px;top:932px;width:1231px;height:51px;box-sizing:border-box;border:1px solid #cdcdcd;border-top:none;"></div>
<div style="left:79px;top:907px;width:1231px;height:25px;background:#00adef;"></div>
<div class="t b" style="left:83.5px;top:914.00px;font-size:13px;line-height:13px;color:#fff;font-weight:bold;">Nápočty dosažených hodin pro výpočet nároku dovolené</div>
<div style="left:1285px;top:909px;width:1px;height:21px;background:#0092cf;"></div>
<svg style="left:1290px;top:915px" width="15" height="9" viewBox="0 0 15 9"><path d="M1 8 L7.5 1.5 L14 8" fill="none" stroke="#fff" stroke-width="1.3"/></svg>
<div class="t" style="left:93.8px;top:939.84px;font-size:12px;line-height:12px;color:#1a4aa2;">Odpracované hodiny pro nárok dovolené</div>
<div class="t" style="left:399.5px;top:939.84px;font-size:12px;line-height:12px;color:#1a4aa2;">Plně započtené náhradní doby</div>
<div class="t" style="left:705.5px;top:939.84px;font-size:12px;line-height:12px;color:#1a4aa2;">Částečně započtené náhradní doby</div>
<div class="t" style="left:1011.5px;top:939.84px;font-size:12px;line-height:12px;color:#1a4aa2;">Průměrná sjednaná týdenní doba</div>
<div style="left:86px;top:953px;width:300px;height:23px;background:#fcfcfc;box-sizing:border-box;border:1px solid #a8a8a8;"></div>
<div class="t" style="left:82.5px;width:300px;text-align:right;top:959.84px;font-size:12px;line-height:12px;color:#000;">80,000</div>
<div style="left:392px;top:953px;width:300px;height:23px;background:#fcfcfc;box-sizing:border-box;border:1px solid #a8a8a8;"></div>
<div class="t" style="left:388.5px;width:300px;text-align:right;top:959.84px;font-size:12px;line-height:12px;color:#000;">0,000</div>
<div style="left:698px;top:953px;width:300px;height:23px;background:#fcfcfc;box-sizing:border-box;border:1px solid #a8a8a8;"></div>
<div class="t" style="left:694.5px;width:300px;text-align:right;top:959.84px;font-size:12px;line-height:12px;color:#000;">0,000</div>
<div style="left:1004px;top:953px;width:299px;height:23px;background:#fcfcfc;box-sizing:border-box;border:1px solid #a8a8a8;"></div>
<div class="t" style="left:1000.5px;width:299px;text-align:right;top:959.84px;font-size:12px;line-height:12px;color:#000;">0,000</div>
<div style="left:1320px;top:36px;width:7px;height:954px;background:#00adef;"></div>
<svg style="left:1320px;top:498px" width="7" height="28" viewBox="0 0 7 28"><g fill="#4ec9f7"><circle cx="3.6" cy="4.9" r="1.8"/><circle cx="3.6" cy="13.9" r="1.8"/><circle cx="3.6" cy="23" r="1.8"/></g></svg>
<div style="left:1330px;top:36px;width:326px;height:954px;background:#0054a5;"></div>
<div class="t" style="left:1337px;top:48.77px;font-size:20px;line-height:20px;color:#fff;letter-spacing:0.6px;">MZ//3642</div>
<svg style="left:1626px;top:44px" width="30" height="26" viewBox="0 0 30 26"><path d="M12 6.5 H20.5 V14.7" fill="none" stroke="#fff" stroke-width="1.3"/><path d="M12.3 10.5 H8.5 V18.6 H16.5 V14.9" fill="none" stroke="#fff" stroke-width="1.3"/><path d="M12.6 14.4 L17.3 9.8 M14.5 9.2 H17.8 V12.5" fill="none" stroke="#fff" stroke-width="1.3"/></svg>
<div style="left:1333px;top:78px;width:320px;height:24px;background:#00adef;"></div>
<div class="t b" style="left:1337px;top:84.50px;font-size:13px;line-height:13px;color:#fff;font-weight:bold;">Základní informace</div>
<div style="left:1628px;top:80px;width:1px;height:20px;background:#0092cf;"></div>
<svg style="left:1633px;top:86px" width="15" height="9" viewBox="0 0 15 9"><path d="M1 8 L7.5 1.5 L14 8" fill="none" stroke="#fff" stroke-width="1.3"/></svg>
<div style="left:1333px;top:102px;width:320px;height:244px;background:#fcfcfc;"></div>
<div class="t" style="left:1340px;top:110.84px;font-size:12px;line-height:12px;color:#1a4aa2;">Pracovník:</div>
<div class="t" style="left:1346px;width:300px;text-align:right;top:110.84px;font-size:12px;line-height:12px;color:#000;">Dohodář Pan</div>
<div style="left:1340px;top:124px;width:306px;height:1px;background:#e3e3e3;"></div>
<div class="t" style="left:1340px;top:132.84px;font-size:12px;line-height:12px;color:#1a4aa2;">Osobní číslo:</div>
<div class="t" style="left:1346px;width:300px;text-align:right;top:132.84px;font-size:12px;line-height:12px;color:#000;">016</div>
<div style="left:1340px;top:146px;width:306px;height:1px;background:#e3e3e3;"></div>
<div class="t" style="left:1340px;top:154.84px;font-size:12px;line-height:12px;color:#1a4aa2;">Kmenové středisko:</div>
<div class="t" style="left:1346px;width:300px;text-align:right;top:154.84px;font-size:12px;line-height:12px;color:#000;">-</div>
<div style="left:1340px;top:168px;width:306px;height:1px;background:#e3e3e3;"></div>
<div class="t" style="left:1340px;top:176.84px;font-size:12px;line-height:12px;color:#1a4aa2;">Právní vztah:</div>
<div class="t" style="left:1346px;width:300px;text-align:right;top:176.84px;font-size:12px;line-height:12px;color:#000;">Dohoda o provedení práce</div>
<div style="left:1340px;top:190px;width:306px;height:1px;background:#e3e3e3;"></div>
<div class="t" style="left:1340px;top:198.84px;font-size:12px;line-height:12px;color:#1a4aa2;">Pořadí:</div>
<div class="t" style="left:1346px;width:300px;text-align:right;top:198.84px;font-size:12px;line-height:12px;color:#000;">1</div>
<div style="left:1340px;top:212px;width:306px;height:1px;background:#e3e3e3;"></div>
<div class="t" style="left:1340px;top:220.84px;font-size:12px;line-height:12px;color:#1a4aa2;">Datum vzniku:</div>
<div class="t" style="left:1346px;width:300px;text-align:right;top:220.84px;font-size:12px;line-height:12px;color:#000;">01.01.2024</div>
<div style="left:1340px;top:234px;width:306px;height:1px;background:#e3e3e3;"></div>
<div class="t" style="left:1340px;top:242.84px;font-size:12px;line-height:12px;color:#1a4aa2;">Středisko:</div>
<div class="t" style="left:1346px;width:300px;text-align:right;top:242.84px;font-size:12px;line-height:12px;color:#000;">-</div>
<div style="left:1340px;top:256px;width:306px;height:1px;background:#e3e3e3;"></div>
<div class="t" style="left:1340px;top:264.84px;font-size:12px;line-height:12px;color:#1a4aa2;">Mzdové období:</div>
<div class="t" style="left:1346px;width:300px;text-align:right;top:264.84px;font-size:12px;line-height:12px;color:#000;">únor 2024</div>
<div style="left:1340px;top:278px;width:306px;height:1px;background:#e3e3e3;"></div>
<svg style="left:1575px;top:289px" width="16" height="16" viewBox="0 0 16 16"><rect width="16" height="16" fill="#3dbd72"/><path d="M4 8.2 L6.8 11 L12.2 5.6" fill="none" stroke="#fff" stroke-width="1.6"/></svg>
<svg style="left:1342px;top:316px" width="19" height="19" viewBox="0 0 19 19"><path d="M2 17 L3 12.5 L13.5 2 Q15 0.8 16.5 2.3 Q18 3.8 16.8 5.3 L6.3 15.8 Z M11.5 4 L14.8 7.3 M3.4 12.9 L6.2 15.6" fill="none" stroke="#36c077" stroke-width="1.7"/></svg>
<div class="t b" style="left:1366.5px;top:317.62px;font-size:19px;line-height:19px;color:#0d4a9b;font-weight:bold;">Změna v budoucím období</div>
<div style="left:1333px;top:352px;width:320px;height:24px;background:#00adef;"></div>
<div class="t b" style="left:1337px;top:358.50px;font-size:13px;line-height:13px;color:#fff;font-weight:bold;">Ostatní údaje</div>
<div style="left:1628px;top:354px;width:1px;height:20px;background:#0092cf;"></div>
<svg style="left:1633px;top:360px" width="15" height="9" viewBox="0 0 15 9"><path d="M1 8 L7.5 1.5 L14 8" fill="none" stroke="#fff" stroke-width="1.3"/></svg>
<div style="left:1333px;top:376px;width:320px;height:147px;background:#fcfcfc;"></div>
<div class="t" style="left:1340px;top:385.24px;font-size:12px;line-height:12px;color:#1a4aa2;">Změnil:</div>
<div class="t" style="left:1346px;width:300px;text-align:right;top:385.24px;font-size:12px;line-height:12px;color:#1a4aa2"><span style="color:#000">K2</span> <span style="letter-spacing:-0.5px;margin-right:-0.5px">14.01.2024 18:42:14</span></div>
<div style="left:1340px;top:398.4px;width:306px;height:1px;background:#e3e3e3;"></div>
<div class="t" style="left:1340px;top:407.04px;font-size:12px;line-height:12px;color:#1a4aa2;">Předvypočetl:</div>
<div class="t" style="left:1346px;width:300px;text-align:right;top:407.04px;font-size:12px;line-height:12px;color:#1a4aa2"><span style="color:#000">K2</span> <span style="letter-spacing:-0.5px;margin-right:-0.5px">14.01.2024 18:42:14</span></div>
<div style="left:1340px;top:420.2px;width:306px;height:1px;background:#e3e3e3;"></div>
<div class="t" style="left:1340px;top:428.84px;font-size:12px;line-height:12px;color:#1a4aa2;">Vytvořil zálohy:</div>
<div class="t" style="left:1346px;width:300px;text-align:right;top:428.84px;font-size:12px;line-height:12px;color:#1a4aa2"><span style="letter-spacing:-0.5px;margin-right:-0.5px">00.00.0000 00:00:00</span></div>
<div style="left:1340px;top:442.0px;width:306px;height:1px;background:#e3e3e3;"></div>
<div class="t" style="left:1340px;top:450.64px;font-size:12px;line-height:12px;color:#1a4aa2;">Vypočetl:</div>
<div class="t" style="left:1346px;width:300px;text-align:right;top:450.64px;font-size:12px;line-height:12px;color:#1a4aa2"><span style="letter-spacing:-0.5px;margin-right:-0.5px">00.00.0000 00:00:00</span></div>
<div style="left:1340px;top:463.79999999999995px;width:306px;height:1px;background:#e3e3e3;"></div>
<div class="t" style="left:1340px;top:472.44px;font-size:12px;line-height:12px;color:#1a4aa2;">Uzavřel:</div>
<div class="t" style="left:1346px;width:300px;text-align:right;top:472.44px;font-size:12px;line-height:12px;color:#1a4aa2"><span style="letter-spacing:-0.5px;margin-right:-0.5px">00.00.0000 00:00:00</span></div>
<div style="left:1340px;top:485.59999999999997px;width:306px;height:1px;background:#e3e3e3;"></div>
<div style="left:1340px;top:493px;width:306px;height:23px;background:#e1e1e1;box-sizing:border-box;border:1px solid #adadad;"></div>
<div class="t" style="left:1340.0px;width:306px;text-align:center;top:499.34px;font-size:12px;line-height:12px;color:#000;">Podrobné údaje o zpracování</div>
<div style="left:1333px;top:884px;width:320px;height:25px;background:#00adef;"></div>
<div class="t b" style="left:1337px;top:890.50px;font-size:13px;line-height:13px;color:#fff;font-weight:bold;">Nastavení</div>
<div style="left:1628px;top:886px;width:1px;height:21px;background:#0092cf;"></div>
<svg style="left:1633px;top:892px" width="15" height="9" viewBox="0 0 15 9"><path d="M1 8 L7.5 1.5 L14 8" fill="none" stroke="#fff" stroke-width="1.3"/></svg>
<div style="left:1333px;top:909px;width:320px;height:77px;background:#fcfcfc;"></div>
<div class="t" style="left:1340px;top:916.84px;font-size:12px;line-height:12px;color:#000;">Nastavené období</div>
<div class="t" style="left:1446px;width:200px;text-align:right;top:916.84px;font-size:12px;line-height:12px;color:#000;">2024/02</div>
<div class="t" style="left:1340px;top:937.84px;font-size:12px;line-height:12px;color:#000;">Zpracované období</div>
<div class="t" style="left:1446px;width:200px;text-align:right;top:937.84px;font-size:12px;line-height:12px;color:#000;">2023/12</div>
<div style="left:1340px;top:959px;width:19px;height:19px;background:#fcfcfc;box-sizing:border-box;border:2px solid #0b4c9c;"></div>
<div style="left:1363px;top:960px;width:107px;height:17px;box-sizing:border-box;border:1px dotted #000;"></div>
<div class="t" style="left:1364px;top:962.84px;font-size:12px;line-height:12px;color:#1a4aa2;">Úplný výpis položek</div>
<div style="left:194px;top:992px;width:1467px;height:1px;background:#1d2a31;"></div>
<div style="left:2px;top:992px;width:192px;height:1px;background:#bdbdbd;"></div>
</body></html>
